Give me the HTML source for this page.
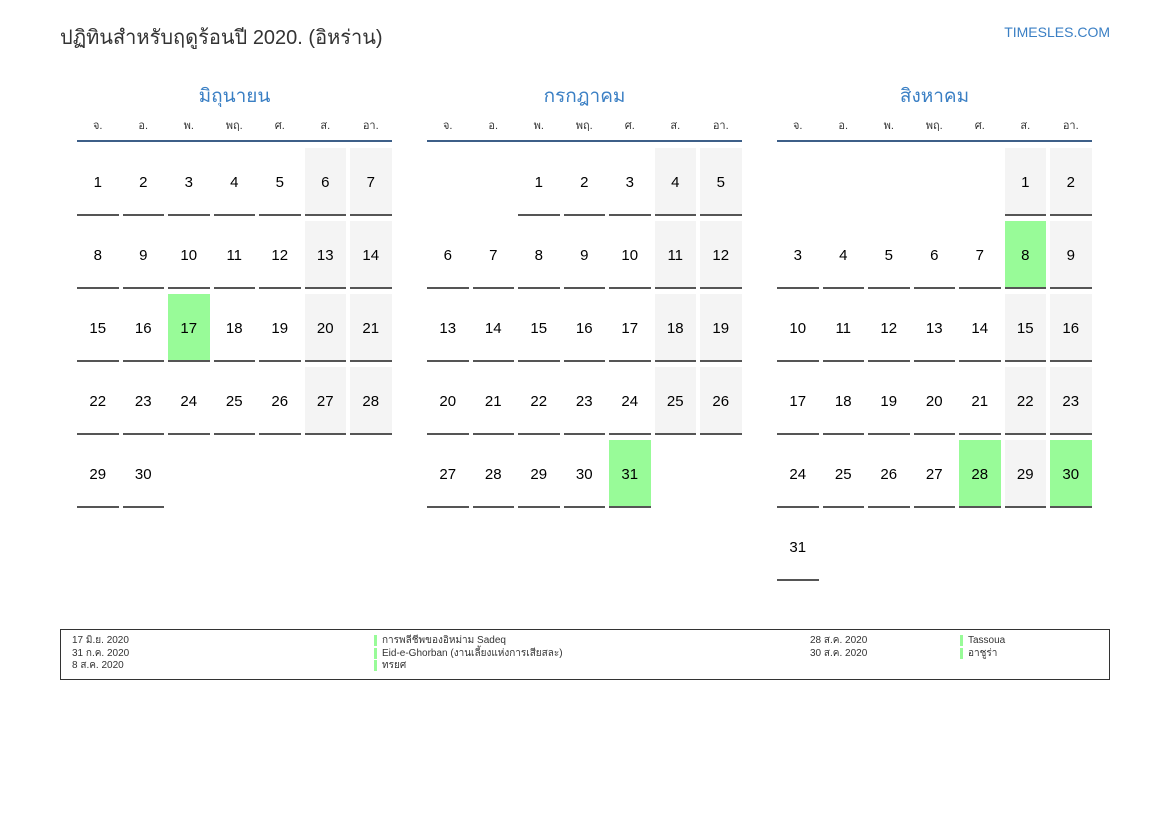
<!DOCTYPE html>
<html><head><meta charset="utf-8"><style>
*{margin:0;padding:0;box-sizing:border-box}
body{width:1169px;height:827px;background:#fff;font-family:"Liberation Sans","Noto Sans CJK SC",sans-serif;position:relative;overflow:hidden;color:#000}
.title{position:absolute;left:60px;top:21px;font-size:20px;color:#333}
.site{position:absolute;right:59px;top:24px;font-size:14px;color:#3a7fc4}
.m{position:absolute;top:82px;width:315px}
.mt{text-align:center;font-size:19px;color:#3a7fc4;height:30px;line-height:30px}
.hd{display:grid;grid-template-columns:repeat(7,41.5px);column-gap:4px;font-size:11px;color:#333;text-align:center;height:31px;line-height:30px;border-bottom:2px solid #3d5f88;margin-top:-1px}
.g7{display:grid;grid-template-columns:repeat(7,41.5px);column-gap:4px;row-gap:5px;grid-auto-rows:68px;margin-top:6px}
.g7 div{display:flex;align-items:center;justify-content:center;font-size:15px;border-bottom:2px solid #555;padding-top:3px}
.g7 .w{background:#f4f4f4}
.g7 .g{background:#98fb98}
.g7 .e{border:none;background:none}
.leg{position:absolute;left:60px;top:629px;width:1050px;height:51px;border:1px solid #333;font-size:10px;color:#333;line-height:12.5px}
.leg div{position:absolute;top:5px}
.bar{border-left:3px solid #98fb98;padding-left:5px}
</style></head><body>
<div class="title">ปฏิทินสำหรับฤดูร้อนปี 2020. (อิหร่าน)</div>
<div class="site">TIMESLES.COM</div>

<div class="m" style="left:77px">
<div class="mt">มิถุนายน</div>
<div class="hd"><span>จ.</span><span>อ.</span><span>พ.</span><span>พฤ.</span><span>ศ.</span><span>ส.</span><span>อา.</span></div>
<div class="g7">
<div>1</div><div>2</div><div>3</div><div>4</div><div>5</div><div class="w">6</div><div class="w">7</div>
<div>8</div><div>9</div><div>10</div><div>11</div><div>12</div><div class="w">13</div><div class="w">14</div>
<div>15</div><div>16</div><div class="g">17</div><div>18</div><div>19</div><div class="w">20</div><div class="w">21</div>
<div>22</div><div>23</div><div>24</div><div>25</div><div>26</div><div class="w">27</div><div class="w">28</div>
<div>29</div><div>30</div>
</div></div>

<div class="m" style="left:427px">
<div class="mt">กรกฎาคม</div>
<div class="hd"><span>จ.</span><span>อ.</span><span>พ.</span><span>พฤ.</span><span>ศ.</span><span>ส.</span><span>อา.</span></div>
<div class="g7">
<div class="e"></div><div class="e"></div><div>1</div><div>2</div><div>3</div><div class="w">4</div><div class="w">5</div>
<div>6</div><div>7</div><div>8</div><div>9</div><div>10</div><div class="w">11</div><div class="w">12</div>
<div>13</div><div>14</div><div>15</div><div>16</div><div>17</div><div class="w">18</div><div class="w">19</div>
<div>20</div><div>21</div><div>22</div><div>23</div><div>24</div><div class="w">25</div><div class="w">26</div>
<div>27</div><div>28</div><div>29</div><div>30</div><div class="g">31</div>
</div></div>

<div class="m" style="left:777px">
<div class="mt">สิงหาคม</div>
<div class="hd"><span>จ.</span><span>อ.</span><span>พ.</span><span>พฤ.</span><span>ศ.</span><span>ส.</span><span>อา.</span></div>
<div class="g7">
<div class="e"></div><div class="e"></div><div class="e"></div><div class="e"></div><div class="e"></div><div class="w">1</div><div class="w">2</div>
<div>3</div><div>4</div><div>5</div><div>6</div><div>7</div><div class="g">8</div><div class="w">9</div>
<div>10</div><div>11</div><div>12</div><div>13</div><div>14</div><div class="w">15</div><div class="w">16</div>
<div>17</div><div>18</div><div>19</div><div>20</div><div>21</div><div class="w">22</div><div class="w">23</div>
<div>24</div><div>25</div><div>26</div><div>27</div><div class="g">28</div><div class="w">29</div><div class="g">30</div>
<div>31</div>
</div></div>

<div class="leg">
<div style="left:11px">17 มิ.ย. 2020<br>31 ก.ค. 2020<br>8 ส.ค. 2020</div>
<div style="left:313px"><span class="bar">การพลีชีพของอิหม่าม Sadeq</span><br><span class="bar">Eid-e-Ghorban (งานเลี้ยงแห่งการเสียสละ)</span><br><span class="bar">ทรยศ</span></div>
<div style="left:749px">28 ส.ค. 2020<br>30 ส.ค. 2020</div>
<div style="left:899px"><span class="bar">Tassoua</span><br><span class="bar">อาชูร่า</span></div>
</div>
</body></html>
